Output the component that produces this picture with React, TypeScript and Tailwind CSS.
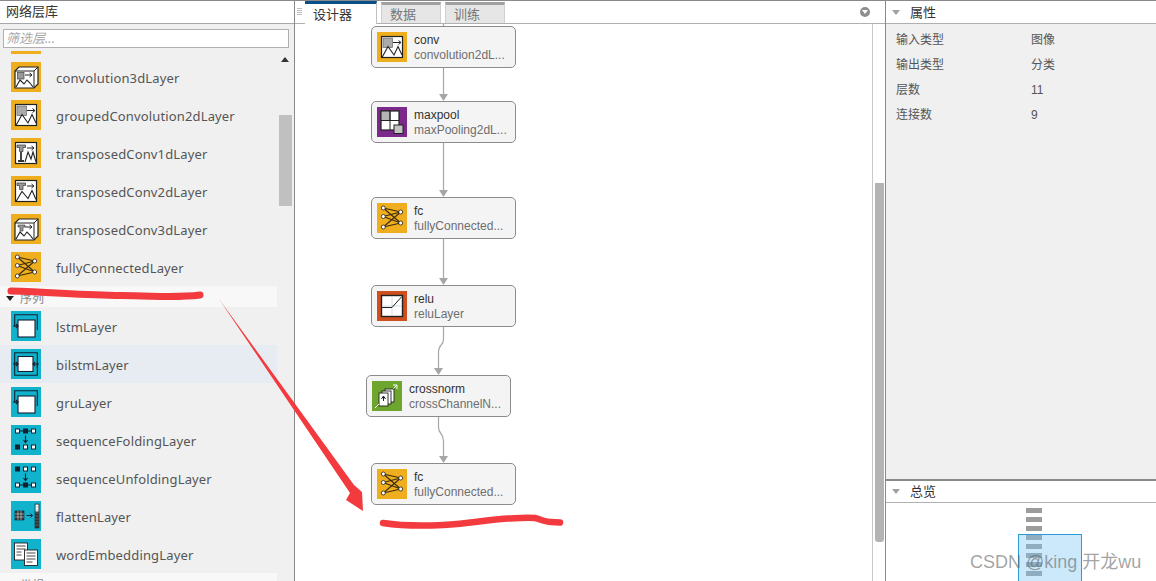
import type { ReactNode } from 'react'

const CJK = '"Noto Sans CJK SC"'

function IconBox({ bg, children }: { bg: string; children: ReactNode }) {
  return (
    <svg width="30" height="30" viewBox="0 0 30 30" className="shrink-0 block" style={{ background: bg }}>
      {children}
    </svg>
  )
}

const AMBER = '#eeae1e'
const TEAL = '#10b2cc'

function Conv2dIcon() {
  return (
    <IconBox bg={AMBER}>
      <rect x="4.500" y="4.500" width="21" height="21" fill="#fff" stroke="#222" strokeWidth="1.200" />
      <rect x="6" y="6" width="9.500" height="9.500" fill="#aaa" stroke="#666" strokeWidth="0.700" />
      <path d="M16 10.500h7.500M21.500 8.500l2.500 2-2.500 2" fill="none" stroke="#222" strokeWidth="1" />
      <path d="M5 25.500l6-11 6 8.500 4-8.500 4 8.500" fill="none" stroke="#222" strokeWidth="1.100" />
    </IconBox>
  )
}

function Conv3dIcon({ transposed }: { transposed?: boolean }) {
  return (
    <IconBox bg={AMBER}>
      <path d="M4 9l4-4h19v17l-4 4H4z" fill="#fff" stroke="#222" strokeWidth="1.200" />
      <path d="M4 9h19v17M23 9l4-4" fill="none" stroke="#222" strokeWidth="1" />
      {transposed ? (
        <path d="M7 11h7v2h-2v4h-3v-4H7z" fill="#999" stroke="#333" strokeWidth="0.600" />
      ) : (
        <rect x="6.500" y="10.500" width="6.500" height="6.500" fill="#999" stroke="#444" strokeWidth="0.700" />
      )}
      <path d="M14 13h6.500M18.500 11l2.500 2-2.500 2" fill="none" stroke="#222" strokeWidth="1" />
      <path d="M5 25l4-7 4 4 3-4 3 3 3 4" fill="none" stroke="#222" strokeWidth="1.100" />
    </IconBox>
  )
}

function TransposedIcon({ oneD }: { oneD?: boolean }) {
  return (
    <IconBox bg={AMBER}>
      <rect x="4.500" y="4.500" width="21" height="21" fill="#fff" stroke="#222" strokeWidth="1.200" />
      <path d="M6 7h8.500v2.500H12v4H8.500v-4H6z" fill="#999" stroke="#333" strokeWidth="0.700" />
      {oneD && <path d="M10 14v9M7 23h6" stroke="#333" strokeWidth="1.800" fill="none" />}
      <path d="M16 10h6.500M20.500 8l2.500 2-2.500 2" fill="none" stroke="#222" strokeWidth="1" />
      {oneD ? (
        <path d="M14 24l3-10 3 7 2-7 3 10" fill="none" stroke="#222" strokeWidth="1.100" />
      ) : (
        <path d="M5 25.500l6-10 6 7 4-8 4 9" fill="none" stroke="#222" strokeWidth="1.100" />
      )}
    </IconBox>
  )
}

function FullyConnectedIcon() {
  const left = [5, 13.500, 24]
  const right = [9, 20]
  return (
    <IconBox bg={AMBER}>
      {left.flatMap(ly =>
        right.map(ry => <line key={`${ly}-${ry}`} x1="6.300" y1={ly} x2="23.700" y2={ry} stroke="#3a2a10" strokeWidth="1.100" />),
      )}
      {left.map(y => <circle key={y} cx="6.300" cy={y} r="2" fill="#fff" stroke="#222" strokeWidth="0.800" />)}
      {right.map(y => <circle key={y} cx="23.700" cy={y} r="2" fill="#fff" stroke="#222" strokeWidth="0.800" />)}
    </IconBox>
  )
}

function MaxPoolIcon() {
  return (
    <IconBox bg="#7b2a8c">
      <rect x="4" y="4" width="18" height="19" fill="#fff" stroke="#222" strokeWidth="1.200" />
      <rect x="4" y="4" width="9" height="9.500" fill="#b5b5b5" stroke="#222" strokeWidth="1" />
      <path d="M13 4v19M4 13.500h18" stroke="#222" strokeWidth="1" />
      <rect x="17" y="18" width="9" height="8.500" fill="#c4c4c4" stroke="#222" strokeWidth="1" />
    </IconBox>
  )
}

function ReluIcon() {
  return (
    <IconBox bg="#cf4f1f">
      <rect x="4.500" y="4.500" width="21" height="21" fill="#fff" stroke="#222" strokeWidth="1.400" />
      <path d="M15 5v20M5 15h20" stroke="#c8d4dc" strokeWidth="0.800" />
      <path d="M5 16.500h10L24.700 5.700" fill="none" stroke="#222" strokeWidth="1" />
    </IconBox>
  )
}

function CrossNormIcon() {
  return (
    <IconBox bg="#6ea52c">
      <path d="M21 4h4v4M25 4l-6 6" fill="none" stroke="#fff" strokeWidth="1" />
      <rect x="13" y="8" width="9" height="13" fill="#fff" stroke="#222" strokeWidth="0.900" />
      <rect x="10" y="10" width="9" height="13" fill="#fff" stroke="#222" strokeWidth="0.900" />
      <rect x="7" y="12" width="9" height="13" fill="#fff" stroke="#222" strokeWidth="0.900" />
      <path d="M11.500 15v5M9.500 18l2-3 2 3" fill="none" stroke="#222" strokeWidth="1" />
      <path d="M3 27l4-4" stroke="#fff" strokeWidth="1" />
    </IconBox>
  )
}

function LstmIcon({ bi }: { bi?: boolean }) {
  return (
    <IconBox bg={TEAL}>
      <path d="M3.700 16V3.700h22.600V19" fill="none" stroke="#123" strokeWidth="1.100" />
      {bi && <path d="M3.700 13v13.300h22.600V14" fill="none" stroke="#123" strokeWidth="1.100" />}
      <rect x="7" y={bi ? 7.500 : 9} width={bi ? 15 : 17} height={bi ? 15 : 17} fill="#fff" stroke="#123" strokeWidth="1.100" />
      <path d="M2 15h5M5 13l2 2-2 2" fill="none" stroke="#123" strokeWidth="1.200" />
      {bi && <path d="M28 15h-6M24 13l-2 2 2 2" fill="none" stroke="#123" strokeWidth="1.200" />}
    </IconBox>
  )
}

function SquareRow({ y, filled, line }: { y: number; filled: number; line?: boolean }) {
  return (
    <>
      {line && <path d={`M7 ${y}h16`} stroke="#123" strokeWidth="1" />}
      {[6.500, 14.500, 22.500].map((x, i) => (
        <rect key={x} x={x - 2} y={y - 2} width="4" height="4" fill={i === filled ? '#123' : '#fff'} stroke="#123" strokeWidth="1" />
      ))}
    </>
  )
}

function FoldIcon({ unfold }: { unfold?: boolean }) {
  return (
    <IconBox bg={TEAL}>
      <SquareRow y={6} filled={unfold ? 0 : 1} line={!unfold} />
      <path d="M14.500 10.500v7M12.500 15l2 2.500 2-2.500" fill="none" stroke="#123" strokeWidth="1.100" />
      <SquareRow y={22} filled={unfold ? 1 : 0} line={unfold} />
    </IconBox>
  )
}

function FlattenIcon() {
  return (
    <IconBox bg={TEAL}>
      <rect x="4" y="10" width="9" height="9" fill="#333" stroke="#123" strokeWidth="0.600" />
      <path d="M7 10v9M10 10v9M4 13h9M4 16h9" stroke="#ddd" strokeWidth="0.600" />
      <path d="M15.500 14.500h6M19.500 12.500l2 2-2 2" fill="none" stroke="#123" strokeWidth="1" />
      <rect x="24" y="3" width="4" height="24" fill="#333" stroke="#123" strokeWidth="0.600" />
      <rect x="24.500" y="3.500" width="3" height="7" fill="#fff" />
      <path d="M24 6h4M24 9h4M24 12h4M24 15h4M24 18h4M24 21h4M24 24h4" stroke="#888" strokeWidth="0.500" />
    </IconBox>
  )
}

function EmbeddingIcon() {
  return (
    <IconBox bg={TEAL}>
      <rect x="3.500" y="4" width="13" height="17" fill="#fff" stroke="#222" strokeWidth="0.900" />
      <path d="M5.500 7h9M5.500 10h9M5.500 13h5M5.500 16h5" stroke="#333" strokeWidth="0.900" />
      <rect x="13.500" y="11" width="13" height="15.500" fill="#fff" stroke="#222" strokeWidth="0.900" />
      <path d="M15.500 14h9M15.500 17h9M15.500 20h9M15.500 23h6" stroke="#333" strokeWidth="0.900" />
    </IconBox>
  )
}

function LibraryRow({ icon, label, active }: { icon: ReactNode; label: string; active?: boolean }) {
  return (
    <div className={`flex h-[38px] items-center gap-[15px] pl-[11px] ${active ? 'bg-[#e7ecf2]' : ''}`}>
      {icon}
      <span className="pt-[4px] text-[13px] tracking-[0.15px] text-[#555]" style={{ fontFamily: `"Noto Sans", ${CJK}, sans-serif` }}>{label}</span>
    </div>
  )
}

function LibraryPanel() {
  return (
    <aside className="flex w-[295px] shrink-0 flex-col border-r border-[#8a8a8a] bg-[#f0f0f0]">
      <div className="flex h-[23px] shrink-0 items-center border-b border-[#a8a8a8] bg-white pl-[6px] text-[13px] text-[#333]">网络层库</div>
      <div className="px-[3px] pt-[5px]">
        <div className="flex h-[19px] w-[286px] items-center border border-[#b0b0b0] bg-white pl-[2px] text-[13px] italic text-[#a8a8a8]">筛选层...</div>
      </div>
      <div className="relative mt-[3px] min-h-0 flex-1 overflow-hidden">
        <div className="-mt-[31px] mr-[17px]">
          <LibraryRow icon={<Conv2dIcon />} label="" />
          <LibraryRow icon={<Conv3dIcon />} label="convolution3dLayer" />
          <LibraryRow icon={<Conv2dIcon />} label="groupedConvolution2dLayer" />
          <LibraryRow icon={<TransposedIcon oneD />} label="transposedConv1dLayer" />
          <LibraryRow icon={<TransposedIcon />} label="transposedConv2dLayer" />
          <LibraryRow icon={<Conv3dIcon transposed />} label="transposedConv3dLayer" />
          <LibraryRow icon={<FullyConnectedIcon />} label="fullyConnectedLayer" />
          <div className="flex h-[21px] items-center bg-[#f8f8f8] pl-[6px] pt-[4px] text-[12px] text-[#888]">
            <span className="mr-[6px] h-0 w-0 border-x-[4px] border-t-[5px] border-x-transparent border-t-[#222]" />
            序列
          </div>
          <LibraryRow icon={<LstmIcon />} label="lstmLayer" />
          <LibraryRow icon={<LstmIcon bi />} label="bilstmLayer" active />
          <LibraryRow icon={<LstmIcon />} label="gruLayer" />
          <LibraryRow icon={<FoldIcon />} label="sequenceFoldingLayer" />
          <LibraryRow icon={<FoldIcon unfold />} label="sequenceUnfoldingLayer" />
          <LibraryRow icon={<FlattenIcon />} label="flattenLayer" />
          <LibraryRow icon={<EmbeddingIcon />} label="wordEmbeddingLayer" />
          <div className="flex h-[21px] items-center bg-[#f8f8f8] pl-[20px] pt-[4px] text-[12px] text-[#888]">常规</div>
        </div>
        {/* list scrollbar */}
        <span className="absolute right-[5px] top-[6px] h-0 w-0 border-x-[4px] border-b-[5px] border-x-transparent border-b-[#333]" />
        <div className="absolute right-[2px] top-[64px] h-[91px] w-[13px] bg-[#c0c0c0]" />
      </div>
    </aside>
  )
}

function Tab({ label, active }: { label: string; active?: boolean }) {
  if (active) {
    return (
      <div className="z-10 flex h-[23px] w-[72px] items-center border-t-[3px] border-r border-t-[#0b4f8a] border-r-[#c0c0c0] bg-white pl-[8px] pt-[2px] text-[13px] text-[#333]">
        {label}
      </div>
    )
  }
  return (
    <div className="mt-[1px] flex h-[21px] w-[60px] items-center border-x border-t-[3px] border-x-[#d0d0d0] border-t-[#a0a0a0] bg-[#e6e6e6] pl-[8px] pt-[2px] text-[13px] text-[#777]">
      {label}
    </div>
  )
}

type NodeData = { name: string; type: string; icon: ReactNode; x: number; y: number }

const NODES: NodeData[] = [
  { name: 'conv', type: 'convolution2dL...', icon: <Conv2dIcon />, x: 76, y: 2 },
  { name: 'maxpool', type: 'maxPooling2dL...', icon: <MaxPoolIcon />, x: 76, y: 77 },
  { name: 'fc', type: 'fullyConnected...', icon: <FullyConnectedIcon />, x: 76, y: 173 },
  { name: 'relu', type: 'reluLayer', icon: <ReluIcon />, x: 76, y: 261 },
  { name: 'crossnorm', type: 'crossChannelN...', icon: <CrossNormIcon />, x: 71, y: 351 },
  { name: 'fc', type: 'fullyConnected...', icon: <FullyConnectedIcon />, x: 76, y: 439 },
]

function GraphNode({ node }: { node: NodeData }) {
  return (
    <div
      className="absolute flex h-[42px] w-[145px] items-center gap-[7px] rounded-[5px] border border-[#8c8c8c] bg-[#f4f4f4] pl-[5px]"
      style={{ left: node.x, top: node.y }}
    >
      {node.icon}
      <div className="pt-[2px] text-[12px] leading-[15px]" style={{ fontFamily: '"Liberation Sans", sans-serif' }}>
        <div className="text-[#333]">{node.name}</div>
        <div className="text-[#6e6e6e]">{node.type}</div>
      </div>
    </div>
  )
}

function Arrowhead({ x, y }: { x: number; y: number }) {
  return <path d={`M${x - 4.500} ${y - 7}h9l-4.500 7z`} fill="#a6a6a6" />
}

function GraphEdges() {
  return (
    <svg className="absolute left-0 top-0" width="590" height="557" fill="none">
      <g stroke="#a6a6a6" strokeWidth="1.200">
        <path d="M148.500 0v3M148.500 44v30M148.500 119v50M148.500 215v42" />
        <path d="M148.500 303v12c0 8-5 4-5 14v18" />
        <path d="M143.500 393v10c0 8 5 5 5 14v18" />
      </g>
      <Arrowhead x={148.500} y={77} />
      <Arrowhead x={148.500} y={173} />
      <Arrowhead x={148.500} y={261} />
      <Arrowhead x={143.500} y={351} />
      <Arrowhead x={148.500} y={439} />
    </svg>
  )
}

function DesignerPanel() {
  return (
    <main className="flex w-[591px] shrink-0 flex-col border-r border-[#8a8a8a] bg-white">
      <div className="relative flex h-[23px] shrink-0 items-start gap-[4px] border-b border-[#b0b0b0] pl-[10px]">
        <div className="absolute left-[2px] top-[7px] flex w-[5px] flex-col gap-[1px]">
          {[0, 1, 2, 3].map(i => <div key={i} className="h-[1px] bg-[#bbb]" />)}
        </div>
        <Tab label="设计器" active />
        <Tab label="数据" />
        <Tab label="训练" />
        <div className="absolute right-[15px] top-[6px] flex h-[10px] w-[10px] items-center justify-center rounded-full bg-[#8e8e8e]">
          <span className="h-0 w-0 border-x-[3px] border-t-[4px] border-x-transparent border-t-white" />
        </div>
      </div>
      <div className="flex min-h-0 flex-1">
        <div className="relative flex-1 overflow-hidden">
          <GraphEdges />
          {NODES.map(n => <GraphNode key={`${n.name}-${n.y}`} node={n} />)}
        </div>
        <div className="w-[13px] shrink-0 border-l border-[#c8c8c8] pl-[2px] pt-[159px]">
          <div className="h-[359px] w-[9px] rounded-b-[3px] bg-[#b4b4b4]" />
        </div>
      </div>
    </main>
  )
}

function PaneHeader({ label }: { label: string }) {
  return (
    <div className="flex h-[22px] shrink-0 items-center border-b border-[#b0b0b0] bg-white pl-[6px] text-[13px] text-[#333]">
      <span className="mr-[10px] h-0 w-0 border-x-[4px] border-t-[5px] border-x-transparent border-t-[#a0a0a0]" />
      {label}
    </div>
  )
}

const PROPERTIES = [
  ['输入类型', '图像'],
  ['输出类型', '分类'],
  ['层数', '11'],
  ['连接数', '9'],
]

function RightPanel() {
  return (
    <aside className="relative flex min-w-0 flex-1 flex-col overflow-hidden" style={{ fontFamily: `"Liberation Sans", ${CJK}, sans-serif` }}>
      <div className="h-[1px] shrink-0 bg-white" />
      <PaneHeader label="属性" />
      <div className="flex h-[457px] shrink-0 flex-col gap-[5px] border-b-2 border-[#8a8a8a] bg-[#f0f0f0] pl-[10px] pt-[6px] text-[12px] text-[#555]">
        {PROPERTIES.map(([k, v]) => (
          <div key={k} className="flex h-5 items-center">
            <span className="w-[135px]">{k}</span>
            <span>{v}</span>
          </div>
        ))}
      </div>
      <PaneHeader label="总览" />
      <div className="relative flex-1 bg-white">
        {/* overview minimap */}
        <div className="absolute left-[140px] top-[5px] flex w-4 flex-col gap-[4px]">
          {[0, 1, 2, 3, 4, 5, 6, 7].map(i => <div key={i} className="h-[5px] bg-[#9c9c9c]" />)}
        </div>
        <div className="absolute left-[132px] top-[31px] h-[60px] w-[64px] border border-[#2a9ad8] bg-[#7cc8f5]/40" />
      </div>
      <div className="absolute left-[84px] top-[550px] whitespace-nowrap text-[18px] leading-[22px] text-[#666]/60">CSDN @king 开龙wu</div>
    </aside>
  )
}

// freehand markup drawn over the whole window
function Markup() {
  return (
    <svg className="pointer-events-none absolute left-0 top-0" width="1156" height="581" fill="none">
      <path d="M11 290c40 1 70 4 110 4.500s55 2.500 79-.500" stroke="#f23a3f" strokeWidth="7" strokeLinecap="round" />
      <path d="M383 522c20 3 40 3 60 2 25-1 50-6 65-6.500 10-.500 20-1.500 27-.500 5 1 10 4 16 4l9 .500" stroke="#f23a3f" strokeWidth="6.500" strokeLinecap="round" />
      <path d="M219 298L354 484l8 7 1 19-17-11 4-7z" fill="#f23a3f" />
    </svg>
  )
}

export default function App() {
  return (
    <div className="relative flex h-[581px] w-[1156px] overflow-hidden border-t border-[#8a8a8a]" style={{ fontFamily: `"Noto Sans", ${CJK}, sans-serif` }}>
      <LibraryPanel />
      <DesignerPanel />
      <RightPanel />
      <Markup />
    </div>
  )
}
